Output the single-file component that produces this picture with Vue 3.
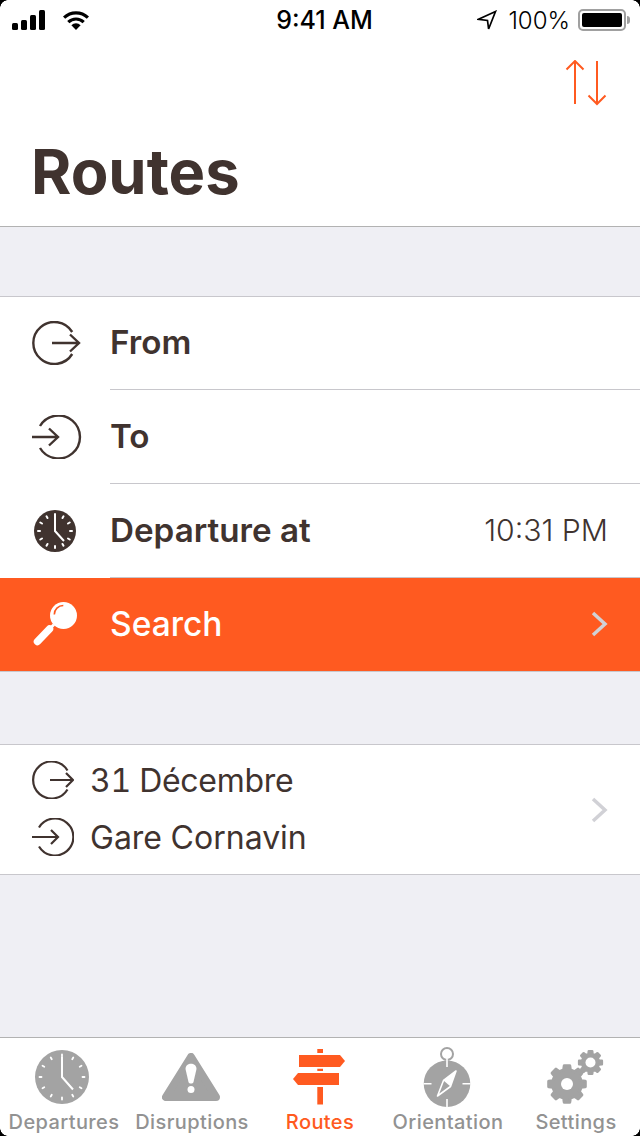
<script setup>
const tabs = [
  { label: "Departures", icon: "clock" },
  { label: "Disruptions", icon: "warn" },
  { label: "Routes", icon: "sign", active: true },
  { label: "Orientation", icon: "compass" },
  { label: "Settings", icon: "gears" },
];

const clockTicks = Array.from({ length: 12 }, (_, i) => i * 30);

// cog outline, teeth are trapezoids around a circle
function gear(cx, cy, outer, inner, teeth) {
  const step = (Math.PI * 2) / teeth;
  let d = "";
  for (let i = 0; i < teeth; i++) {
    const a = i * step - Math.PI / 2;
    const pts = [
      [inner, a - step * 0.3],
      [outer, a - step * 0.19],
      [outer, a + step * 0.19],
      [inner, a + step * 0.3],
    ];
    pts.forEach(([r, t], j) => {
      const x = (cx + r * Math.cos(t)).toFixed(2);
      const y = (cy + r * Math.sin(t)).toFixed(2);
      d += (i === 0 && j === 0 ? "M" : "L") + x + " " + y + " ";
    });
  }
  return d + "Z";
}

const bigGear = gear(20, 35, 18.5, 14.5, 8);
const smallGear = gear(43.5, 13.5, 11.5, 8.5, 8);
</script>

<template>
  <div class="screen">
    <div class="status">
      <div class="status-left">
        <svg class="signal" width="34" height="20" viewBox="0 0 34 20">
          <rect x="0" y="13" width="6" height="7" rx="1.5" />
          <rect x="9" y="10" width="6" height="10" rx="1.5" />
          <rect x="18" y="5" width="6" height="15" rx="1.5" />
          <rect x="27" y="0" width="6" height="20" rx="1.5" />
        </svg>
        <svg class="wifi" width="28" height="20" viewBox="0 0 28 20">
          <path d="M14 20l-4.6-4.8a6.6 6.6 0 0 1 9.2 0z" />
          <path d="M7.4 13.2a9.6 9.6 0 0 1 13.2 0l2.2-2.3a12.8 12.8 0 0 0-17.6 0z" />
          <path d="M3.2 8.8a15.8 15.8 0 0 1 21.6 0l2.2-2.3a19 19 0 0 0-26 0z" />
        </svg>
      </div>
      <span class="time">9:41 AM</span>
      <div class="status-right">
        <svg class="loc" width="20" height="20" viewBox="0 0 20 20">
          <path d="M18.5 1.5L1.5 9.3l9 1.1 1.1 8.6z" />
        </svg>
        <span class="battery-pct">100%</span>
        <div class="battery"><div class="battery-fill"></div></div>
        <div class="battery-tip"></div>
      </div>
    </div>

    <header class="header">
      <div class="nav">
        <svg width="42" height="46" viewBox="0 0 42 46" fill="none" stroke="#ff5a20" stroke-width="2">
          <path d="M10 1v43M1.5 9.5L10 1l8.5 8.5" />
          <path d="M32 1v43M23.5 35.5L32 44l8.5-8.5" />
        </svg>
      </div>
      <h1>Routes</h1>
    </header>

    <div class="gap first"></div>

    <section class="group">
      <div class="row">
        <svg class="row-icon" width="50" height="44" viewBox="0 0 50 44" fill="none" stroke="#40332f" stroke-width="2.4">
          <path d="M40.2 11A21 21 0 1 0 40.2 33" />
          <path d="M20 22h27M38 13.5l9 8.5-9 8.500" />
        </svg>
        <div class="row-body"><span class="label">From</span></div>
      </div>
      <div class="row">
        <svg class="row-icon" width="50" height="44" viewBox="0 0 50 44" fill="none" stroke="#40332f" stroke-width="2.4">
          <path d="M8 11A21.5 21.5 0 1 1 8 33" />
          <path d="M0 22h26M17 13.5l9 8.5-9 8.5" />
        </svg>
        <div class="row-body"><span class="label">To</span></div>
      </div>
      <div class="row">
        <svg class="row-icon" width="50" height="44" viewBox="0 0 50 44">
          <circle cx="23" cy="22" r="21" fill="#40332f" />
          <g stroke="#fff" stroke-width="2" stroke-linecap="round">
            <line v-for="a in clockTicks" :key="a" x1="23" y1="5" x2="23" y2="7" :transform="`rotate(${a} 23 22)`" />
          </g>
          <path d="M23 7v15l9 10" fill="none" stroke="#fff" stroke-width="2" />
        </svg>
        <div class="row-body">
          <span class="label">Departure at</span>
          <span class="value">10:31 PM</span>
        </div>
      </div>
      <div class="row search">
        <svg class="row-icon" width="50" height="48" viewBox="0 0 50 48">
          <circle cx="31.5" cy="15.5" r="13.5" fill="#fff" />
          <path d="M17.5 29L22 24.5" stroke="#fff" stroke-width="3" />
          <path d="M5.5 41.5L17.5 29" stroke="#fff" stroke-width="7.5" stroke-linecap="round" />
          <path d="M22.3 14.5A9 9 0 0 1 31.3 5.5" fill="none" stroke="#ff5a20" stroke-width="1.6" />
        </svg>
        <div class="row-body">
          <span class="label">Search</span>
          <svg class="chev" width="17" height="26" viewBox="0 0 17 26" fill="none" stroke="#d1d1d6" stroke-width="3.5">
            <path d="M2 2l12 11L2 24" />
          </svg>
        </div>
      </div>
    </section>

    <div class="gap second"></div>

    <section class="recent">
      <div class="stops">
        <div class="stop">
          <svg width="42" height="38" viewBox="0 0 42 38" fill="none" stroke="#40332f" stroke-width="2.2">
            <path d="M35.500 9.500A18.500 18.500 0 1 0 35.500 28.500" />
            <path d="M18 19h23M34 12l7 7-7 7" />
          </svg>
          <span class="date">31 Décembre</span>
        </div>
        <div class="stop">
          <svg width="42" height="38" viewBox="0 0 42 38" fill="none" stroke="#40332f" stroke-width="2.2">
            <path d="M7 9.500A18.500 18.500 0 1 1 7 28.500" />
            <path d="M0 19h26M19 12l7 7-7 7" />
          </svg>
          <span>Gare Cornavin</span>
        </div>
      </div>
      <svg class="chev" width="17" height="26" viewBox="0 0 17 26" fill="none" stroke="#d1d1d6" stroke-width="3.5">
        <path d="M2 2l12 11L2 24" />
      </svg>
    </section>

    <div class="spacer"></div>

    <nav class="tabbar">
      <div v-for="t in tabs" :key="t.label" :class="['tab', t.active ? 'active' : '']">
        <div class="tab-icon" :class="t.icon">
          <svg v-if="t.icon === 'clock'" width="54" height="54" viewBox="0 0 54 54">
            <circle cx="27" cy="27" r="27" fill="#a3a3a3" />
            <g stroke="#fff" stroke-width="1.8" stroke-linecap="round">
              <line v-for="a in clockTicks" :key="a" x1="27" y1="4.5" x2="27" y2="6.5" :transform="`rotate(${a} 27 27)`" />
            </g>
            <path d="M27 7v20l11 12.500" fill="none" stroke="#fff" stroke-width="2" />
          </svg>
          <svg v-else-if="t.icon === 'warn'" width="58" height="48" viewBox="0 0 58 48">
            <path d="M29 4L4 44h50z" fill="#a3a3a3" stroke="#a3a3a3" stroke-width="8" stroke-linejoin="round" />
            <path d="M23.5 16c0-7 11-7 11 0l-3 13c-.5 2-4.5 2-5 0z" fill="#fff" />
            <circle cx="29" cy="36.5" r="3.5" fill="#fff" />
          </svg>
          <svg v-else-if="t.icon === 'sign'" width="54" height="56" viewBox="0 0 54 56">
            <path d="M24.3 0H30v4h-5.700zM24.300 19.700H30V22h-5.700zM24.300 38H30v17.500h-5.700z" fill="#ff5a20" />
            <path d="M6 6h41l5 6-5 6H6z" fill="#ff5a20" />
            <path d="M46 24H5l-5 6 5 6h41z" fill="#ff5a20" />
          </svg>
          <svg v-else-if="t.icon === 'compass'" width="48" height="60" viewBox="0 0 48 60">
            <circle cx="24" cy="7" r="6" fill="none" stroke="#a3a3a3" stroke-width="2" />
            <circle cx="24" cy="36.7" r="23.3" fill="#a3a3a3" />
            <path d="M24 11.5v8.5M24 52v8M.5 36.700h8M39.500 36.700h8" stroke="#fff" stroke-width="1.6" />
            <path d="M33 24l-5.500 15.500L14.500 49l6-15.500z" fill="none" stroke="#fff" stroke-width="1.6" stroke-linejoin="round" />
            <path d="M33 24l-5.500 15.500-7-6z" fill="#fff" />
          </svg>
          <svg v-else width="58" height="56" viewBox="0 0 58 56">
            <path :d="bigGear" fill="#a3a3a3" stroke="#a3a3a3" stroke-width="3" stroke-linejoin="round" />
            <circle cx="20" cy="35" r="6" fill="#fff" />
            <path :d="smallGear" fill="#a3a3a3" stroke="#a3a3a3" stroke-width="2.5" stroke-linejoin="round" />
            <circle cx="43.5" cy="13.5" r="5" fill="#fff" />
          </svg>
        </div>
        <span class="tab-label">{{ t.label }}</span>
      </div>
    </nav>

    <div class="corner tl"></div>
    <div class="corner tr"></div>
    <div class="corner bl"></div>
    <div class="corner br"></div>
  </div>
</template>

<style scoped>
.screen {
  position: relative;
  width: 640px;
  height: 1136px;
  display: flex;
  flex-direction: column;
  overflow: hidden;
  background: #efeff4;
  color: #40332f;
  font-family: Inter, "Noto Sans", sans-serif;
}

.status {
  height: 40px;
  flex: none;
  display: grid;
  grid-template-columns: 1fr auto 1fr;
  align-items: center;
  background: #fff;
  color: #000;
  padding: 0 10px 0 12px;
}

.status-left {
  display: flex;
  align-items: center;
  gap: 16px;
}

.status-left svg {
  fill: #000;
}

.loc {
  fill: none;
  stroke: #000;
  stroke-width: 1.7;
}

.time {
  font-size: 25px;
  font-weight: 500;
  margin-left: 7px;
}

.status-right {
  display: flex;
  align-items: center;
  justify-content: flex-end;
}

.battery-pct {
  font-size: 24px;
  font-weight: 350;
  margin-left: 11px;
  margin-right: 8px;
}

.battery {
  width: 48px;
  height: 22px;
  box-sizing: border-box;
  border: 2px solid #a0a0a0;
  border-radius: 5px;
  padding: 2px;
}

.battery-fill {
  height: 100%;
  background: #000;
  border-radius: 2px;
}

.battery-tip {
  width: 3px;
  height: 8px;
  margin-left: 1px;
  background: #a0a0a0;
  border-radius: 0 3px 3px 0;
}

.header {
  height: 187px;
  flex: none;
  box-sizing: border-box;
  background: #fff;
  border-bottom: 1px solid #b2b2b2;
  padding: 20px 33px 0;
}

.nav {
  height: 46px;
  display: flex;
  justify-content: flex-end;
}

h1 {
  margin: 36px 0 0 -2px;
  font-size: 61.5px;
  line-height: 60px;
  font-weight: 700;
}

.gap.first {
  height: 69px;
  flex: none;
}

.gap.second {
  height: 72px;
  flex: none;
}

.group {
  flex: none;
  background: #fff;
  border-top: 1px solid #c8c7cc;
  border-bottom: 1px solid #c8c7cc;
}

.row {
  height: 94px;
  display: flex;
  align-items: center;
  padding-left: 32px;
}

.row:first-child {
  height: 93px;
}

.row-icon {
  flex: none;
  margin-right: 28px;
  margin-bottom: 1px;
}

.row-body {
  flex: 1;
  height: 100%;
  display: flex;
  align-items: center;
  justify-content: space-between;
  box-sizing: border-box;
  border-bottom: 1px solid #c8c7cc;
  padding-right: 32px;
  padding-bottom: 2px;
}

.label {
  font-size: 33.2px;
  font-weight: 560;
}

.value {
  font-size: 30.2px;
  font-weight: 350;
}

.row.search {
  height: 93px;
  background: #ff5a20;
  color: #fff;
}

.row.search .row-body {
  border-bottom: none;
}

.row.search .label {
  font-size: 33.5px;
  font-weight: 500;
}

.recent {
  flex: none;
  height: 131px;
  box-sizing: border-box;
  background: #fff;
  border-top: 1px solid #c8c7cc;
  border-bottom: 1px solid #c8c7cc;
  display: flex;
  align-items: center;
  justify-content: space-between;
  padding: 0 32px;
}

.stops {
  display: flex;
  flex-direction: column;
  gap: 19px;
  padding-bottom: 2px;
}

.stop {
  height: 38px;
  display: flex;
  align-items: center;
  gap: 17px;
  font-size: 32px;
  font-variant-numeric: tabular-nums;
}

.stop span {
  margin-left: -1px;
}

.stop .date {
  letter-spacing: -0.3px;
}

.spacer {
  flex: 1;
}

.tabbar {
  height: 99px;
  flex: none;
  box-sizing: border-box;
  display: grid;
  grid-template-columns: repeat(5, 1fr);
  background: #fff;
  border-top: 1px solid #b2b2b2;
}

.tab {
  display: flex;
  flex-direction: column;
  align-items: center;
  color: #929292;
}

.tab.active {
  color: #ff5a20;
}

.tab-icon {
  height: 72px;
  display: flex;
  align-items: center;
  justify-content: center;
  padding-top: 6px;
  box-sizing: border-box;
}

.tab-icon.clock {
  margin-left: -4px;
}

.tab-icon.warn,
.tab-icon.compass {
  margin-left: -2px;
}

.tab-label {
  font-size: 20px;
  font-weight: 500;
  line-height: 24px;
  letter-spacing: 0.4px;
}

.corner {
  position: absolute;
  width: 8px;
  height: 8px;
  background: radial-gradient(circle at var(--cx) var(--cy), transparent 7.5px, #000 8px);
}

.corner.tl { top: 0; left: 0; --cx: 8px; --cy: 8px; }
.corner.tr { top: 0; right: 0; --cx: 0; --cy: 8px; }
.corner.bl { bottom: 0; left: 0; --cx: 8px; --cy: 0; }
.corner.br { bottom: 0; right: 0; --cx: 0; --cy: 0; }
</style>
